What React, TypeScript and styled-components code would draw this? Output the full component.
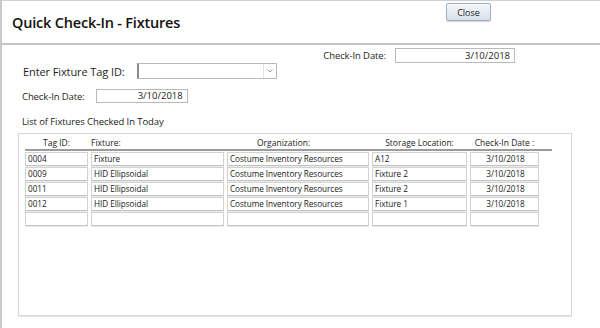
import React from "react";
import styled, { createGlobalStyle } from "styled-components";

const Global = createGlobalStyle`
  html, body { margin: 0; padding: 0; background: #ffffff; }
  body { font-family: "Open Sans", "Noto Sans", sans-serif; color: #1b1b1b; }
`;

const Window = styled.div`
  width: 598px;
  height: 327px;
  border-left: 2px solid #c9c9c9;
  border-top: 1px solid #d0d0d0;
  background: #fff;
  overflow: hidden;
`;

const Header = styled.div`
  height: 42px;
  display: flex;
  align-items: flex-start;
  border-bottom: 2px solid #c4c4c4;
`;

const Title = styled.h1`
  flex: 1;
  margin: 0;
  padding: 12px 0 0 10px;
  font-size: 14.5px;
  font-weight: 600;
  letter-spacing: -0.2px;
  color: #111;
`;

const CloseButton = styled.button`
  margin: 2px 109px 0 0;
  width: 45px;
  height: 18px;
  padding: 0;
  font-family: "Open Sans", sans-serif;
  font-size: 9px;
  color: #222;
  border: 1px solid #9fb0c8;
  border-radius: 2px;
  background: linear-gradient(#f6f7f9, #e6ebf2 50%, #d7dfea);
  box-shadow: 0 1px 1px rgba(0, 0, 0, 0.18);
`;

const Body = styled.div`
  padding: 3px 0 0 0;
`;

const Row = styled.div<{ $left: number; $top: number; $gap: number; $right?: boolean }>`
  display: flex;
  align-items: center;
  justify-content: ${(p) => (p.$right ? "flex-end" : "flex-start")};
  padding-left: ${(p) => p.$left}px;
  padding-right: ${(p) => (p.$right ? 85 : 0)}px;
  margin-top: ${(p) => p.$top}px;
  gap: ${(p) => p.$gap}px;
`;

const Label = styled.span<{ $size?: number }>`
  font-size: ${(p) => p.$size ?? 9.5}px;
  color: #1e1e1e;
  white-space: nowrap;
  letter-spacing: -0.1px;
`;

const DateBox = styled.div<{ $w: number; $h: number }>`
  width: ${(p) => p.$w}px;
  height: ${(p) => p.$h}px;
  box-sizing: border-box;
  border: 1px solid #b9b9b9;
  font-size: 9.5px;
  text-align: right;
  padding-right: 4px;
  line-height: ${(p) => p.$h - 2}px;
  background: #fff;
`;

const Combo = styled.div`
  width: 140px;
  height: 16px;
  box-sizing: border-box;
  border: 1px solid #b8b8b8;
  border-left: 2px solid #8c8c8c;
  display: flex;
  justify-content: flex-end;
  align-items: center;
  background: #fff;
`;

const ComboArrow = styled.div`
  width: 12px;
  height: 14px;
  border-left: 1px solid #e4e4e4;
  display: flex;
  align-items: center;
  justify-content: center;
`;

const Caption = styled.div`
  padding-left: 20px;
  margin-top: 12px;
  font-size: 9.5px;
  letter-spacing: -0.1px;
`;

const GridBox = styled.div`
  margin: 5px 0 0 16px;
  width: 554px;
  height: 183px;
  box-sizing: border-box;
  border: 1px solid #d6d6d6;
  box-shadow: 0 1px 0 #e6e6e6;
  padding: 2px 0 0 6px;
`;

const Cols = `63px 133px 142px 95px 69px`;

const HeaderRow = styled.div`
  display: grid;
  grid-template-columns: ${Cols};
  column-gap: 3px;
  width: 527px;
  height: 13px;
  align-items: center;
  border-bottom: 2px solid #9c9c9c;
`;

const HeadCell = styled.div<{ $align: string; $pad?: number }>`
  font-size: 8.5px;
  text-align: ${(p) => p.$align};
  padding-left: ${(p) => p.$pad ?? 0}px;
  color: #222;
  white-space: nowrap;
`;

const Rows = styled.div`
  display: flex;
  flex-direction: column;
  gap: 1px;
  margin-top: 1px;
`;

const DataRow = styled.div`
  display: grid;
  grid-template-columns: ${Cols};
  column-gap: 3px;
`;

const Cell = styled.div<{ $center?: boolean }>`
  height: 14px;
  box-sizing: border-box;
  border: 1px solid #d2d2d2;
  border-bottom-color: #c2c2c2;
  box-shadow: 0 1px 0 #ececec;
  font-size: 8.2px;
  letter-spacing: -0.05px;
  line-height: 12px;
  padding-left: 2px;
  text-align: ${(p) => (p.$center ? "center" : "left")};
  white-space: nowrap;
  overflow: hidden;
  color: #1a1a1a;
`;

const data = [
  ["0004", "Fixture", "Costume Inventory Resources", "A12", "3/10/2018"],
  ["0009", "HID Ellipsoidal", "Costume Inventory Resources", "Fixture 2", "3/10/2018"],
  ["0011", "HID Ellipsoidal", "Costume Inventory Resources", "Fixture 2", "3/10/2018"],
  ["0012", "HID Ellipsoidal", "Costume Inventory Resources", "Fixture 1", "3/10/2018"],
  ["", "", "", "", ""],
];

export default function App() {
  return (
    <>
      <Global />
      <Window>
        <Header>
          <Title>Quick Check-In - Fixtures</Title>
          <CloseButton>Close</CloseButton>
        </Header>
        <Body>
          <Row $left={0} $top={0} $gap={9} $right>
            <Label>Check-In Date:</Label>
            <DateBox $w={120} $h={15}>3/10/2018</DateBox>
          </Row>
          <Row $left={21} $top={0} $gap={12}>
            <Label $size={11}>Enter Fixture Tag ID:</Label>
            <Combo>
              <ComboArrow>
                <svg width="6" height="4" viewBox="0 0 6 4">
                  <path d="M0.5 0.5 L3 3 L5.5 0.5" fill="none" stroke="#9a9a9a" strokeWidth="1" />
                </svg>
              </ComboArrow>
            </Combo>
          </Row>
          <Row $left={20} $top={10} $gap={11}>
            <Label>Check-In Date:</Label>
            <DateBox $w={92} $h={14}>3/10/2018</DateBox>
          </Row>
          <Caption>List of Fixtures Checked In Today</Caption>
          <GridBox>
            <HeaderRow>
              <HeadCell $align="center">Tag ID:</HeadCell>
              <HeadCell $align="left">Fixture:</HeadCell>
              <HeadCell $align="left" $pad={30}>Organization:</HeadCell>
              <HeadCell $align="center">Storage Location:</HeadCell>
              <HeadCell $align="center">Check-In Date :</HeadCell>
            </HeaderRow>
            <Rows>
              {data.map((r, i) => (
                <DataRow key={i}>
                  <Cell>{r[0]}</Cell>
                  <Cell>{r[1]}</Cell>
                  <Cell>{r[2]}</Cell>
                  <Cell>{r[3]}</Cell>
                  <Cell $center>{r[4]}</Cell>
                </DataRow>
              ))}
            </Rows>
          </GridBox>
        </Body>
      </Window>
    </>
  );
}
